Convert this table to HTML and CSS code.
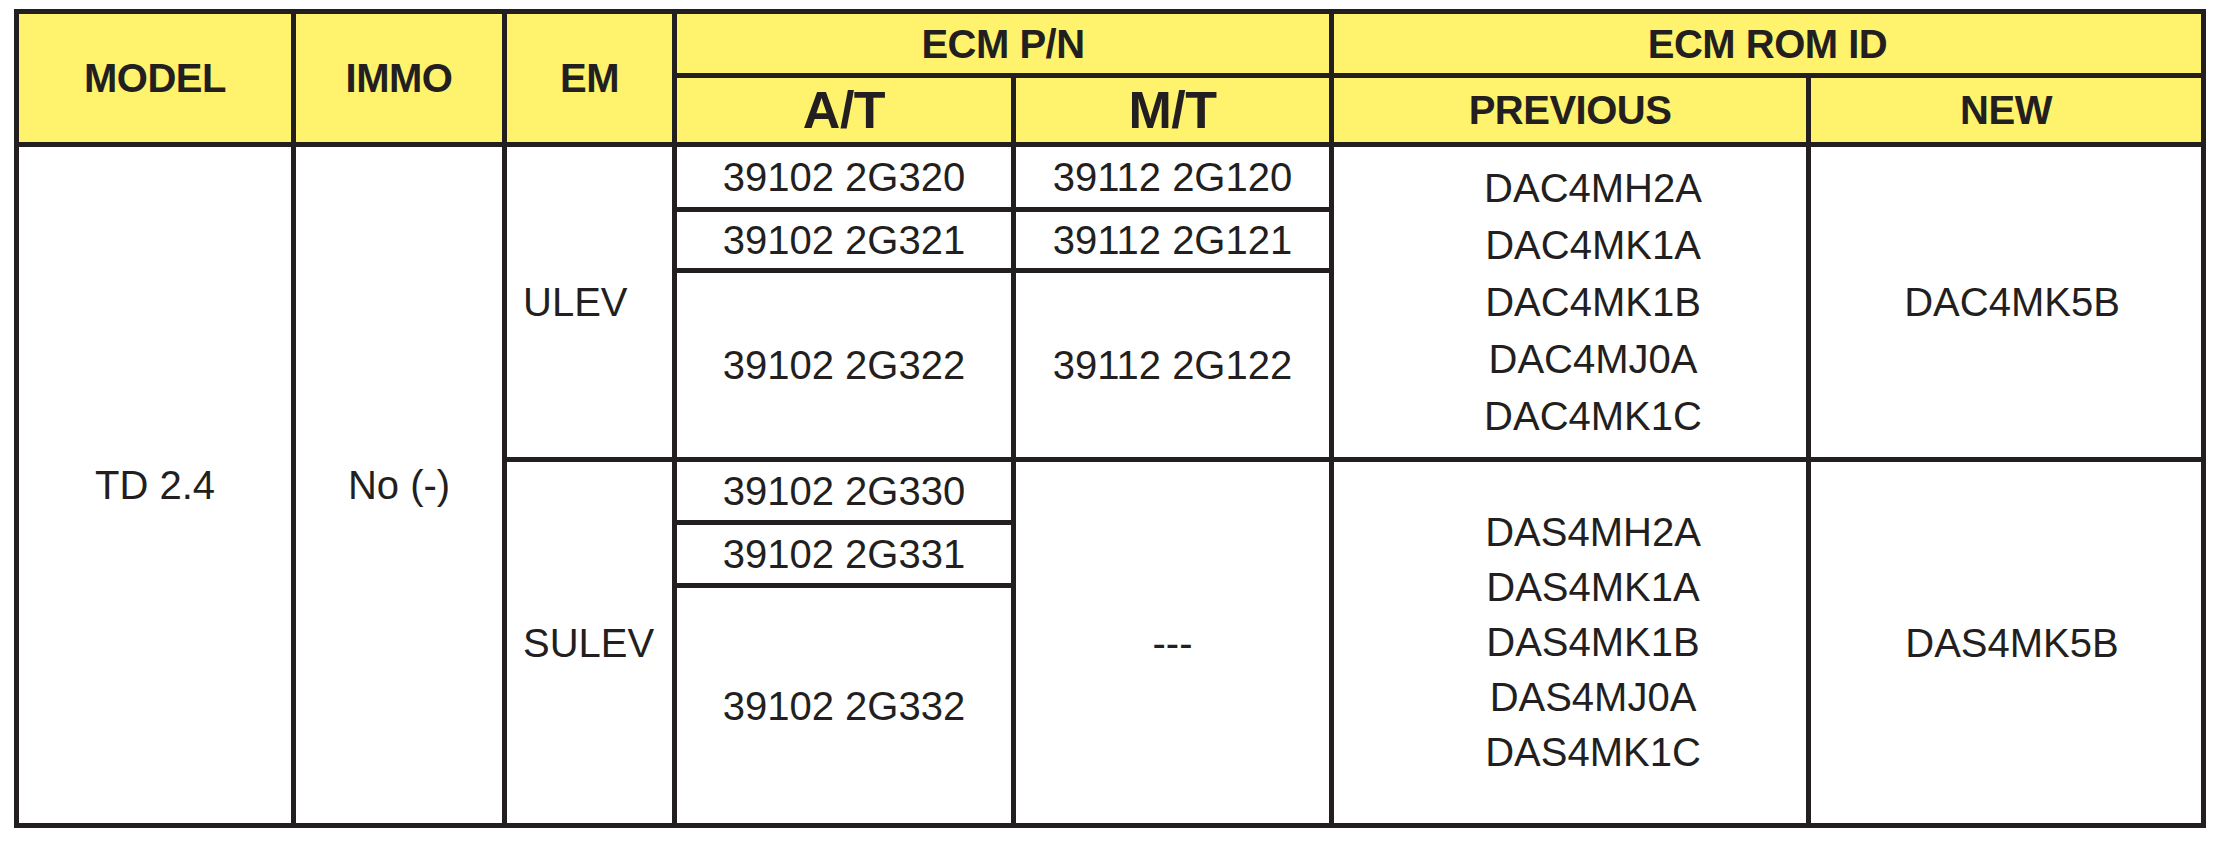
FILE: index.html
```html
<!DOCTYPE html>
<html lang="en">
<head>
<meta charset="utf-8">
<title>ECM ROM ID table</title>
<link rel="stylesheet" href="styles.css">
</head>
<body>
<div class="ecm-table">
  <div class="cell head a-model">MODEL</div>
  <div class="cell head a-immo">IMMO</div>
  <div class="cell head a-em">EM</div>
  <div class="cell head a-pn">ECM P/N</div>
  <div class="cell head a-rom">ECM ROM ID</div>
  <div class="cell head big a-at">A/T</div>
  <div class="cell head big a-mt">M/T</div>
  <div class="cell head a-prev">PREVIOUS</div>
  <div class="cell head a-new">NEW</div>

  <div class="cell a-td">TD 2.4</div>
  <div class="cell a-no">No (-)</div>

  <div class="cell em-cell a-ulev">ULEV</div>
  <div class="cell a-a20">39102 2G320</div>
  <div class="cell a-m20">39112 2G120</div>
  <div class="cell a-a21">39102 2G321</div>
  <div class="cell a-m21">39112 2G121</div>
  <div class="cell a-a22">39102 2G322</div>
  <div class="cell a-m22">39112 2G122</div>
  <div class="cell list list-ulev a-dac">
    <div>DAC4MH2A</div>
    <div>DAC4MK1A</div>
    <div>DAC4MK1B</div>
    <div>DAC4MJ0A</div>
    <div>DAC4MK1C</div>
  </div>
  <div class="cell new-cell a-dacn">DAC4MK5B</div>

  <div class="cell em-cell a-sulev">SULEV</div>
  <div class="cell a-a30">39102 2G330</div>
  <div class="cell a-a31">39102 2G331</div>
  <div class="cell a-a32">39102 2G332</div>
  <div class="cell a-dash">---</div>
  <div class="cell list list-sulev a-das">
    <div>DAS4MH2A</div>
    <div>DAS4MK1A</div>
    <div>DAS4MK1B</div>
    <div>DAS4MJ0A</div>
    <div>DAS4MK1C</div>
  </div>
  <div class="cell new-cell a-dasn">DAS4MK5B</div>
</div>
</body>
</html>
```

FILE: styles.css
```css
html, body {
  margin: 0;
  background: #ffffff;
}

body {
  padding: 9px 0 0 14px;
  font-family: "Liberation Sans", Arial, sans-serif;
  color: #231f20;
}

.ecm-table {
  display: grid;
  width: fit-content;
  grid-template-columns: 272px 206px 165px 334px 313px 472px 390px;
  grid-template-rows: 59px 64px 60px 56px 184px 58px 58px 235px;
  grid-template-areas:
    "model immo em    pn  pn   rom  rom"
    "model immo em    at  mt   prev new"
    "td    no   ulev  a20 m20  dac  dacn"
    "td    no   ulev  a21 m21  dac  dacn"
    "td    no   ulev  a22 m22  dac  dacn"
    "td    no   sulev a30 dash das  dasn"
    "td    no   sulev a31 dash das  dasn"
    "td    no   sulev a32 dash das  dasn";
  gap: 5px;
  padding: 5px;
  background: #231f20;
}

.cell {
  display: flex;
  align-items: center;
  justify-content: center;
  background: #ffffff;
  font-size: 40px;
  line-height: 1;
  white-space: nowrap;
}

.head {
  background: #fff36d;
  font-weight: bold;
  font-size: 40px;
  letter-spacing: -0.5px;
}

.head.big {
  font-size: 52px;
}

.em-cell {
  justify-content: flex-start;
  padding-left: 16px;
}

.list {
  flex-direction: column;
  padding-left: 46px;
}

.list-ulev {
  line-height: 57px;
}

.list-sulev {
  line-height: 55px;
}

.new-cell {
  padding-left: 12px;
}

.a-model { grid-area: model; }
.a-immo { grid-area: immo; }
.a-em { grid-area: em; }
.a-pn { grid-area: pn; }
.a-rom { grid-area: rom; }
.a-at { grid-area: at; }
.a-mt { grid-area: mt; }
.a-prev { grid-area: prev; }
.a-new { grid-area: new; }
.a-td { grid-area: td; }
.a-no { grid-area: no; }
.a-ulev { grid-area: ulev; }
.a-sulev { grid-area: sulev; }
.a-a20 { grid-area: a20; }
.a-m20 { grid-area: m20; }
.a-a21 { grid-area: a21; }
.a-m21 { grid-area: m21; }
.a-a22 { grid-area: a22; }
.a-m22 { grid-area: m22; }
.a-a30 { grid-area: a30; }
.a-a31 { grid-area: a31; }
.a-a32 { grid-area: a32; }
.a-dash { grid-area: dash; }
.a-dac { grid-area: dac; }
.a-dacn { grid-area: dacn; }
.a-das { grid-area: das; }
.a-dasn { grid-area: dasn; }
```
